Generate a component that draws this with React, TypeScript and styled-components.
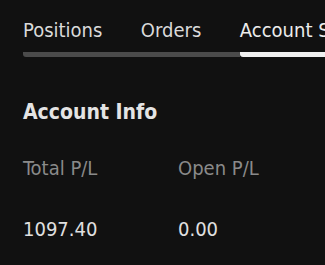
import React from "react";
import styled, { createGlobalStyle } from "styled-components";

const Global = createGlobalStyle`
  html, body { margin: 0; padding: 0; background: #111111; }
  body { font-family: "DejaVu Sans Condensed", "DejaVu Sans", sans-serif; color: #e2e2e2; }
`;

const Page = styled.div`
  width: 325px;
  height: 265px;
  overflow: hidden;
  background: #111111;
  padding: 0 0 0 23px;
  box-sizing: border-box;
`;

const TabBar = styled.div`
  display: flex;
  padding-top: 18px;
  white-space: nowrap;
`;

const Tab = styled.div<{ $active?: boolean }>`
  flex-shrink: 0;
  font-size: 20px;
  line-height: 24px;
  padding: 0 38.5px 10px 0;
  color: ${(p) => (p.$active ? "#ececec" : "#dadada")};
  border-bottom: 5px solid ${(p) => (p.$active ? "#f0f0f0" : "#4b4b4b")};
  border-bottom-left-radius: ${(p) => (p.$active ? "3px" : "0")};
  &:first-child { border-bottom-left-radius: 3px; }
`;

const Heading = styled.h2`
  margin: 42px 0 0 0;
  font-size: 21px;
  line-height: 26px;
  font-weight: bold;
  color: #e4e4e4;
`;

const Grid = styled.div`
  display: grid;
  grid-template-columns: 155px 155px;
  row-gap: 37px;
  margin-top: 31px;
`;

const Label = styled.div`
  font-size: 20px;
  line-height: 24px;
  color: #8a8a8a;
`;

const Value = styled.div`
  font-size: 20px;
  line-height: 24px;
  color: #e0e0e0;
`;

export default function App() {
  return (
    <>
      <Global />
      <Page>
        <TabBar>
          <Tab>Positions</Tab>
          <Tab>Orders</Tab>
          <Tab $active>Account Summary</Tab>
        </TabBar>
        <Heading>Account Info</Heading>
        <Grid>
          <Label>Total P/L</Label>
          <Label>Open P/L</Label>
          <Value>1097.40</Value>
          <Value>0.00</Value>
        </Grid>
      </Page>
    </>
  );
}
